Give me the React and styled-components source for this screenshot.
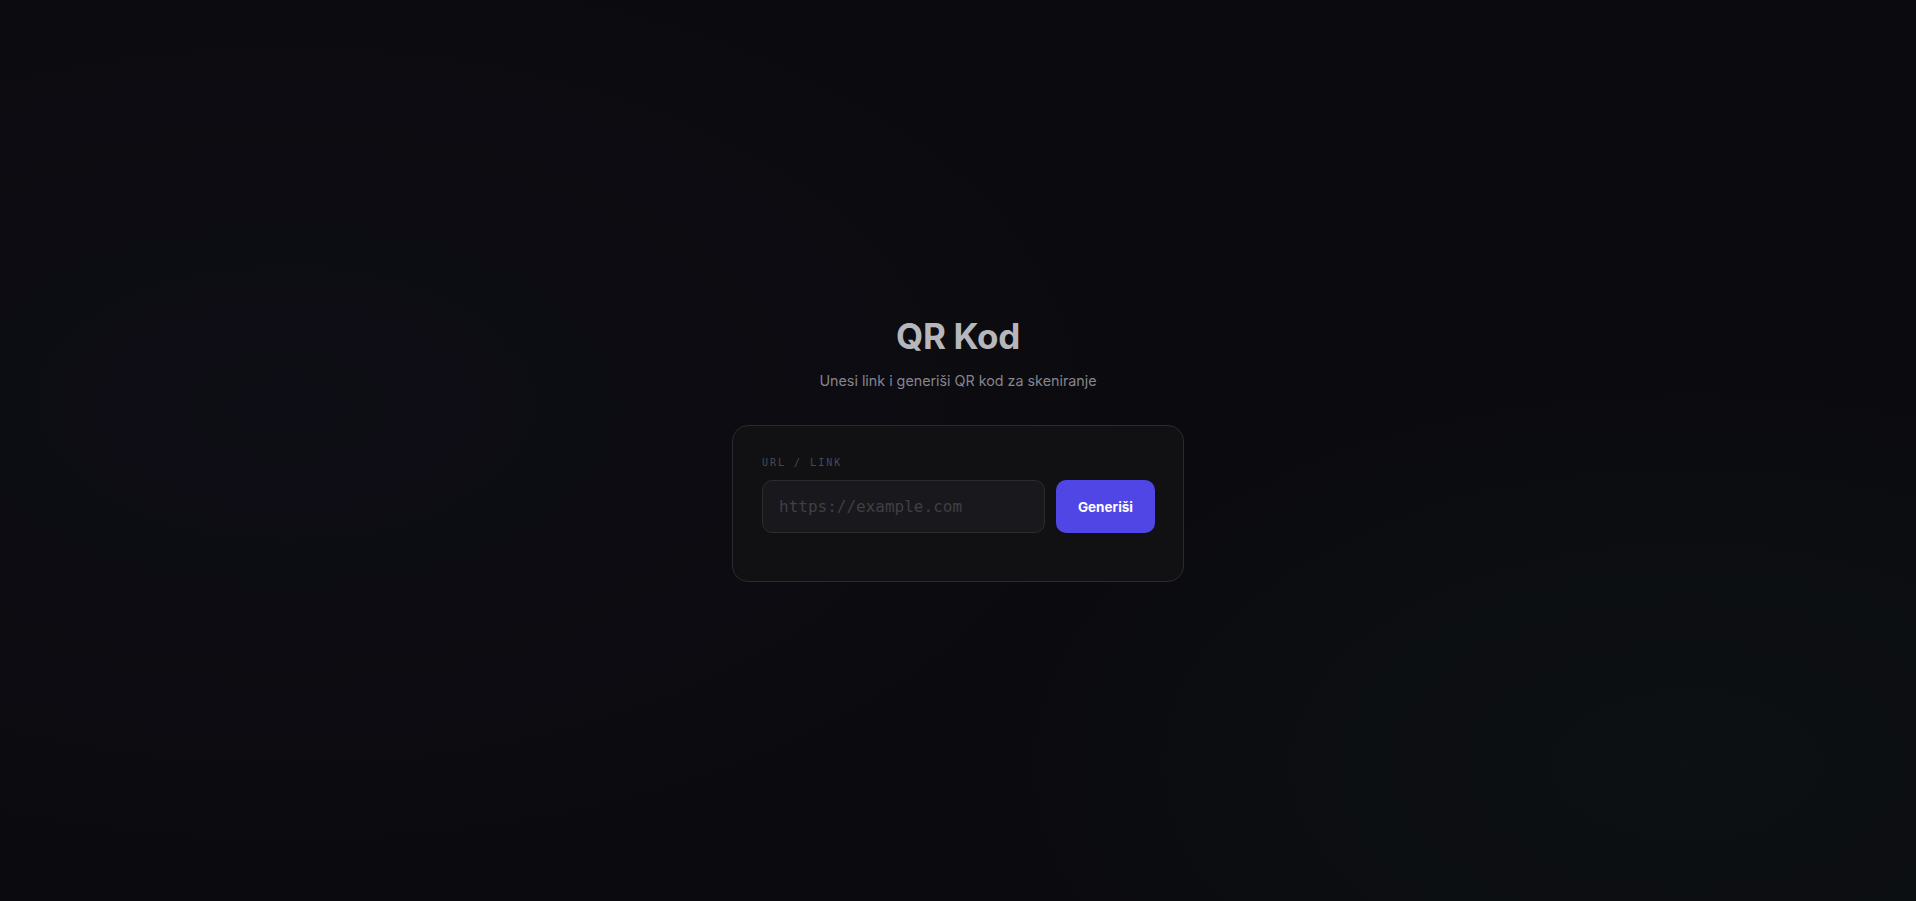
import React from 'react'
import styled, { createGlobalStyle } from 'styled-components'

const GlobalStyle = createGlobalStyle`
  * { box-sizing: border-box; }
  html, body { margin: 0; padding: 0; }
  body {
    background: #0b0b0f;
    font-family: Inter, "Noto Sans", sans-serif;
  }
`

const Page = styled.div`
  min-height: 100vh;
  display: flex;
  flex-direction: column;
  align-items: center;
  justify-content: center;
  background:
    radial-gradient(ellipse 60% 70% at 15% 45%, rgba(70, 60, 160, 0.045), transparent 75%),
    radial-gradient(ellipse 50% 60% at 88% 85%, rgba(40, 120, 90, 0.05), transparent 75%),
    #0b0b0f;
`

const Title = styled.h1`
  margin: 0;
  font-size: 35px;
  line-height: 41px;
  font-weight: 700;
  letter-spacing: -0.3px;
  color: #b6b6bd;
`

const Subtitle = styled.p`
  margin: 13px 0 33px;
  font-size: 14.3px;
  line-height: 22px;
  color: #85858d;
`

const Card = styled.div`
  width: 452px;
  margin-bottom: 3px;
  padding: 30px 28px 48px 29px;
  background: #111114;
  border: 1px solid #2a2a2f;
  border-radius: 16px;
`

const Label = styled.label`
  display: block;
  font-family: "DejaVu Sans Mono", "Liberation Mono", monospace;
  font-size: 10px;
  line-height: 14px;
  letter-spacing: 2px;
  color: #4a4a52;
  margin-bottom: 10px;
`

const Row = styled.div`
  display: flex;
  gap: 11px;
`

const Input = styled.input`
  flex: 1;
  min-width: 0;
  height: 53px;
  padding: 0 16px;
  background: #19191d;
  border: 1px solid #2b2b30;
  border-radius: 10px;
  color: #d0d0d6;
  font-family: "DejaVu Sans Mono", "Liberation Mono", monospace;
  font-size: 16px;
  outline: none;

  &::placeholder {
    color: #3f3f46;
  }
`

const Button = styled.button`
  width: 99px;
  height: 53px;
  border: none;
  border-radius: 10px;
  background: #4f46e5;
  color: #ffffff;
  font-family: Inter, "Noto Sans", sans-serif;
  font-size: 13.5px;
  font-weight: 700;
  cursor: pointer;
`

export default function App() {
  return (
    <>
      <GlobalStyle />
      <Page>
        <Title>QR Kod</Title>
        <Subtitle>Unesi link i generiši QR kod za skeniranje</Subtitle>
        <Card>
          <Label>URL / LINK</Label>
          <Row>
            <Input type="text" placeholder="https://example.com" />
            <Button>Generiši</Button>
          </Row>
        </Card>
      </Page>
    </>
  )
}
